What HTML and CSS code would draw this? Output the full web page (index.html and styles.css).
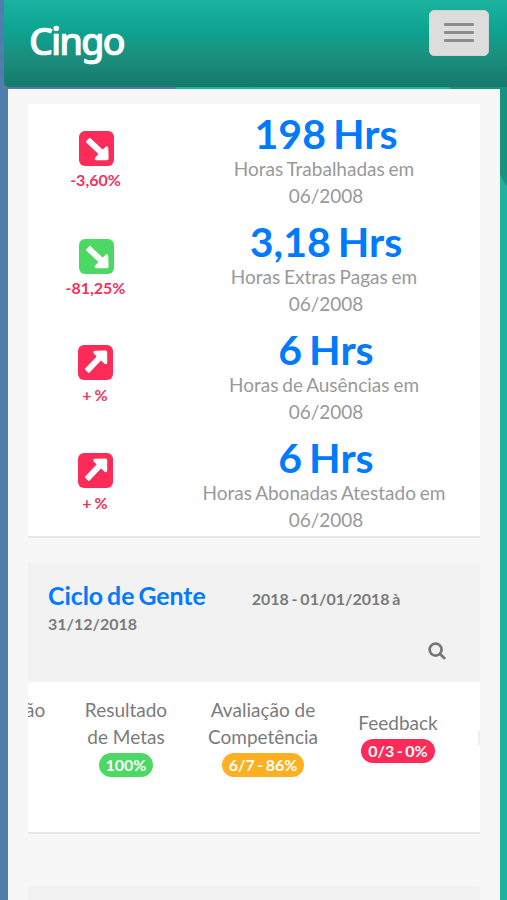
FILE: index.html
```html
<!DOCTYPE html>
<html lang="pt-br">
<head>
    <meta charset="UTF-8">
    <meta name="viewport" content="width=device-width, initial-scale=1.0">
    <title>Cingo</title>
    <link rel="stylesheet" href="styles.css">
</head>
<body>
    <svg width="0" height="0" class="sprite">
        <symbol id="seta" viewBox="0 0 35 35">
            <path d="M7.2 10.2 L10.4 7 Q11 6.6 11.6 7.2 L23.6 18.6 L27 15.4 Q29 14.6 29.3 17 L29.6 27.5 Q29.6 29.2 28 29.2 L17 29.2 Q15 28.6 16 26.8 L19.4 23 L7.2 11.4 Q6.7 10.8 7.2 10.2 Z" fill="#fff"/>
        </symbol>
    </svg>

    <div class="fundo-direito"></div>
    <header class="topo">
        <div class="logo">Cingo</div>
        <button type="button" class="menu" aria-label="Menu">
            <span></span>
            <span></span>
            <span></span>
        </button>
    </header>
    <div class="faixa"></div>

    <main class="conteudo">
        <section class="painel indicadores">
            <div class="linha">
                <div class="variacao">
                    <svg class="icone vermelho"><use href="#seta"/></svg>
                    <span>-3,60%</span>
                </div>
                <div class="valor">
                    <h2>198 Hrs</h2>
                    <p><span>Horas Trabalhadas em</span><br>06/2008</p>
                </div>
            </div>
            <div class="linha">
                <div class="variacao">
                    <svg class="icone verde"><use href="#seta"/></svg>
                    <span>-81,25%</span>
                </div>
                <div class="valor">
                    <h2>3,18 Hrs</h2>
                    <p><span>Horas Extras Pagas em</span><br>06/2008</p>
                </div>
            </div>
            <div class="linha">
                <div class="variacao alta">
                    <svg class="icone vermelho"><use href="#seta"/></svg>
                    <span>+ %</span>
                </div>
                <div class="valor">
                    <h2>6 Hrs</h2>
                    <p><span>Horas de Ausências em</span><br>06/2008</p>
                </div>
            </div>
            <div class="linha">
                <div class="variacao alta">
                    <svg class="icone vermelho"><use href="#seta"/></svg>
                    <span>+ %</span>
                </div>
                <div class="valor">
                    <h2>6 Hrs</h2>
                    <p><span>Horas Abonadas Atestado em</span><br>06/2008</p>
                </div>
            </div>
        </section>

        <section class="painel ciclo">
            <div class="cabecalho">
                <div class="periodo">
                    <strong>Ciclo de Gente</strong>
                    <span>2018 - 01/01/2018 à</span>
                </div>
                <div class="fim">31/12/2018</div>
                <svg class="busca" width="18" height="18" viewBox="0 0 18 18">
                    <circle cx="7.6" cy="7.6" r="6" fill="none" stroke="#777" stroke-width="2.7"/>
                    <path d="M12 12 L16.2 16" stroke="#777" stroke-width="2.8" stroke-linecap="round"/>
                </svg>
            </div>
            <div class="etapas">
                <div class="etapa cortada">ão</div>
                <div class="etapa metas">Resultado<br>de Metas<span class="badge verde">100%</span></div>
                <div class="etapa competencia">Avaliação de<br>Competência<span class="badge laranja">6/7 - 86%</span></div>
                <div class="etapa feedback">Feedback<span class="badge vermelho">0/3 - 0%</span></div>
                <div class="proxima"></div>
            </div>
        </section>

        <section class="painel seguinte"></section>
    </main>
</body>
</html>
```

FILE: styles.css
```css
* {
    box-sizing: border-box;
}
body {
    margin: 0;
    height: 900px;
    overflow: hidden;
    position: relative;
    font-family: Lato, "Liberation Sans", sans-serif;
    background: linear-gradient(to right, #4e7dae 176px, #1eb39f 176px);
    color: #7b7b7b;
}
.sprite {
    position: absolute;
}
.fundo-direito {
    position: absolute;
    z-index: -1;
    top: 0;
    right: 0;
    width: 57px;
    height: 186px;
    background: #1a9280;
    clip-path: polygon(0 0, 100% 0, 100% 100%, 54px 182px, 50px 174px, 0 174px);
}
.topo {
    height: 87px;
    margin-left: 4px;
    padding: 0 18px 0 25px;
    display: flex;
    justify-content: space-between;
    align-items: flex-start;
    background: linear-gradient(#1bb3a0, #0da491 30px, #1b8f7f 56px, #147a6c);
    border-bottom-left-radius: 5px;
}
.logo {
    padding-top: 12px;
    color: #fff;
    font-family: "Noto Sans", sans-serif;
    font-size: 38px;
    font-weight: 500;
    letter-spacing: -2.1px;
    line-height: 57px;
    -webkit-text-stroke: 0.7px #fff;
}
.menu {
    width: 60px;
    height: 46px;
    margin-top: 10px;
    padding: 0 0 1px;
    display: flex;
    flex-direction: column;
    align-items: center;
    justify-content: center;
    gap: 5px;
    border: 1px solid #d0d5d4;
    border-radius: 5px;
    background: #ddd;
}
.menu span {
    width: 30px;
    height: 3px;
    border-radius: 1px;
    background: #8c8c8c;
}
.faixa {
    height: 2px;
}
.conteudo {
    height: 811px;
    margin: 0 7px 0 8px;
    padding: 14px 20px 0;
    overflow: hidden;
    background: #f7f7f7;
    border-top: 1px solid #fff;
}
.painel {
    background: #fff;
    border-bottom: 2px solid #e7e7e8;
}
.indicadores {
    height: 434px;
    padding-top: 5px;
}
.linha {
    height: 108px;
    display: grid;
    grid-template-columns: 136px 1fr;
}
.variacao {
    padding-top: 22px;
    display: flex;
    flex-direction: column;
    align-items: center;
    color: #f0325c;
    font-size: 16px;
    font-weight: bold;
    line-height: 27px;
    word-spacing: -1px;
}
.variacao span {
    margin-right: 1px;
}
.icone {
    width: 35px;
    height: 35px;
    border-radius: 6px;
}
.alta {
    padding: 20px 1px 0 0;
}
.alta .icone {
    margin-bottom: 1px;
    transform: rotate(-90deg);
}
.vermelho {
    background: #fd2b57;
}
.verde {
    background: #4bd964;
}
.laranja {
    background: #feb022;
}
.valor {
    margin-right: -4px;
    padding: 0 22px 0 26px;
    text-align: center;
    white-space: nowrap;
}
.valor h2 {
    margin: 0;
    color: #007aff;
    font-size: 41px;
    line-height: 49px;
    word-spacing: -3px;
}
.valor p {
    margin: -3px 0 0;
    color: #999;
    font-size: 19px;
    line-height: 27px;
    word-spacing: -1px;
}
.valor p span {
    margin-right: 4px;
}
.ciclo {
    height: 271px;
    margin-top: 25px;
}
.cabecalho {
    height: 119px;
    padding: 18px 20px 0;
    background: #f2f2f2;
}
.periodo {
    height: 30px;
    display: flex;
    align-items: baseline;
    gap: 46px;
    line-height: 30px;
}
.periodo strong {
    color: #007aff;
    font-size: 24.8px;
    word-spacing: -2px;
}
.periodo span, .fim {
    font-size: 16px;
    font-weight: bold;
    word-spacing: -1.1px;
}
.fim {
    line-height: 26px;
}
.busca {
    display: block;
    margin: 5px 14px 0 auto;
}
.etapas {
    height: 150px;
    padding-top: 14px;
    display: flex;
    overflow: hidden;
    font-size: 19px;
    line-height: 27px;
    text-align: center;
}
.etapa {
    display: flex;
    flex-direction: column;
    align-items: center;
    white-space: nowrap;
}
.cortada {
    width: 31px;
    margin-left: -3px;
    align-items: flex-start;
}
.metas {
    width: 140px;
}
.competencia {
    width: 134px;
}
.feedback {
    width: 136px;
    padding-top: 13px;
}
.badge {
    height: 24px;
    margin-top: 3px;
    padding: 0 7px;
    border-radius: 12px;
    color: #fff;
    font-size: 16px;
    font-weight: bold;
    line-height: 23px;
    word-spacing: -1.4px;
}
.proxima {
    width: 2px;
    height: 14px;
    margin: 35px 0 0 auto;
    background: #eee;
}
.seguinte {
    height: 40px;
    margin-top: 52px;
    background: #f2f2f2;
    border-radius: 4px 4px 0 0;
}
```
